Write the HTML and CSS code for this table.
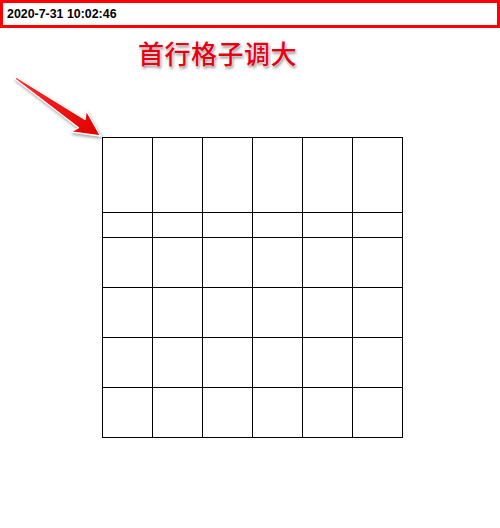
FILE: index.html
```html
<!DOCTYPE html>
<html>
<head>
<meta charset="utf-8">
<link rel="stylesheet" href="styles.css">
</head>
<body>
<div class="page">
  <div class="timebar">2020-7-31 10:02:46</div>
  <div class="title">首行格子调大</div>
  <div class="grid">
    <div class="cell"></div><div class="cell"></div><div class="cell"></div><div class="cell"></div><div class="cell"></div><div class="cell"></div>
    <div class="cell"></div><div class="cell"></div><div class="cell"></div><div class="cell"></div><div class="cell"></div><div class="cell"></div>
    <div class="cell"></div><div class="cell"></div><div class="cell"></div><div class="cell"></div><div class="cell"></div><div class="cell"></div>
    <div class="cell"></div><div class="cell"></div><div class="cell"></div><div class="cell"></div><div class="cell"></div><div class="cell"></div>
    <div class="cell"></div><div class="cell"></div><div class="cell"></div><div class="cell"></div><div class="cell"></div><div class="cell"></div>
    <div class="cell"></div><div class="cell"></div><div class="cell"></div><div class="cell"></div><div class="cell"></div><div class="cell"></div>
  </div>
  <svg class="arrow" width="110" height="145" viewBox="0 0 110 145">
    <defs>
      <linearGradient id="ag" x1="0" y1="0" x2="1" y2="1">
        <stop offset="0" stop-color="#ff2a2a"/>
        <stop offset="1" stop-color="#e00000"/>
      </linearGradient>
    </defs>
    <polygon points="16,77 85,119.5 86.3,110.6 100.5,136 71,132 78.5,127.8 15,79" fill="url(#ag)" stroke="#fff" stroke-width="1.3" stroke-linejoin="round"/>
  </svg>
</div>
</body>
</html>
```
FILE: styles.css
```css
html, body {
  margin: 0;
  padding: 0;
  background: #fff;
}
.page {
  position: relative;
  width: 500px;
  height: 528px;
  display: flex;
  flex-direction: column;
}
.timebar {
  box-sizing: border-box;
  height: 28px;
  border: 3px solid #f00;
  padding-left: 4px;
  font: bold 12.4px/22px "Liberation Sans", Arial, sans-serif;
  color: #000;
}
.title {
  margin-top: 11px;
  margin-left: 138px;
  height: 28px;
  font: 500 26px/28px "Noto Sans CJK SC", sans-serif;
  color: #e60012;
  text-shadow: 0 0 1px #fff, 0 0 2px #fff, 1px 2px 3px rgba(0,0,0,0.5);
  letter-spacing: 0.5px;
}
.grid {
  margin-top: 70px;
  margin-left: 102px;
  display: grid;
  grid-template-columns: repeat(6, 49px);
  grid-template-rows: 74px 24px 49px 49px 49px 49px;
  gap: 1px;
  padding: 1px;
  background: #000;
  width: max-content;
}
.cell {
  background: #fff;
}
.arrow {
  position: absolute;
  left: 0;
  top: 0;
  filter: drop-shadow(1px 2px 1.5px rgba(0,0,0,0.35));
}
```
